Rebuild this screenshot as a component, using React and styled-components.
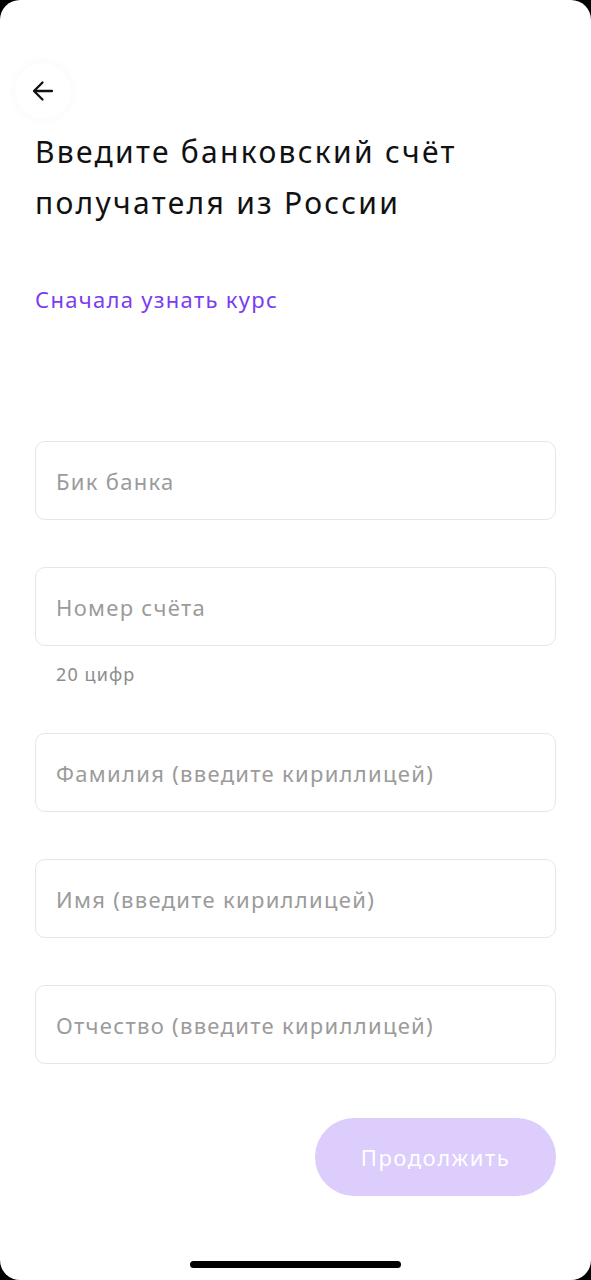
import React from 'react';
import styled, { createGlobalStyle } from 'styled-components';

const GlobalStyle = createGlobalStyle`
  html, body {
    margin: 0;
    padding: 0;
    background: #000;
  }
  * { box-sizing: border-box; }
`;

const Screen = styled.div`
  position: relative;
  width: 591px;
  height: 1280px;
  background: #fff;
  border-radius: 20px;
  padding: 63px 35px 0;
  font-family: "Noto Sans", "Open Sans", sans-serif;
  display: flex;
  flex-direction: column;
`;

const BackButton = styled.button`
  width: 56px;
  height: 56px;
  margin-left: -20px;
  border: none;
  border-radius: 50%;
  background: #fff;
  box-shadow: 0 0 12px rgba(0, 0, 0, 0.035);
  display: flex;
  align-items: center;
  justify-content: center;
  padding: 0;
  cursor: pointer;
`;

const Title = styled.h1`
  margin: 7px 0 0;
  font-size: 30px;
  font-weight: 400;
  line-height: 51px;
  color: #111;
  letter-spacing: 2.3px;
`;

const RateLink = styled.a`
  margin-top: 56px;
  font-size: 22px;
  line-height: 30px;
  color: #7a3df0;
  letter-spacing: 1.3px;
  text-decoration: none;
`;

const Form = styled.div`
  margin-top: 127px;
  display: flex;
  flex-direction: column;
`;

const Field = styled.div`
  display: flex;
  flex-direction: column;
  margin-bottom: ${({ $hint }) => ($hint ? '0' : '47px')};
`;

const Input = styled.input`
  width: 100%;
  height: 79px;
  border: 1.5px solid #e6e6e6;
  border-radius: 10px;
  padding: 0 20px;
  font-family: inherit;
  font-size: 22px;
  letter-spacing: 1.3px;
  color: #111;
  outline: none;
  &::placeholder {
    color: #9b9b9b;
  }
`;

const Hint = styled.div`
  margin: 17px 0 48px 21px;
  line-height: 22px;
  font-size: 18px;
  letter-spacing: 1.1px;
  color: #8c8c8c;
`;

const Footer = styled.div`
  margin-top: 7px;
  display: flex;
  justify-content: flex-end;
`;

const ContinueButton = styled.button`
  width: 241px;
  height: 78px;
  border: none;
  border-radius: 39px;
  background: #dccdfc;
  color: #fff;
  font-family: inherit;
  font-size: 22px;
  letter-spacing: 1.5px;
  cursor: default;
`;

const HomeIndicator = styled.div`
  position: absolute;
  left: 190px;
  bottom: 12px;
  width: 211px;
  height: 7px;
  border-radius: 4px;
  background: #000;
`;

const fields = [
  { placeholder: 'Бик банка' },
  { placeholder: 'Номер счёта', hint: '20 цифр' },
  { placeholder: 'Фамилия (введите кириллицей)' },
  { placeholder: 'Имя (введите кириллицей)' },
  { placeholder: 'Отчество (введите кириллицей)' },
];

export default function App() {
  return (
    <>
      <GlobalStyle />
      <Screen>
        <BackButton aria-label="Назад">
          <svg width="24" height="24" viewBox="0 0 24 24" fill="none" stroke="#111" strokeWidth="2.3" strokeLinecap="round" strokeLinejoin="round">
            <path d="M21 12H3.5" />
            <path d="M11.5 3.5L3 12l8.5 8.5" />
          </svg>
        </BackButton>
        <Title>
          Введите банковский счёт
          <br />
          получателя из России
        </Title>
        <RateLink href="#">Сначала узнать курс</RateLink>
        <Form>
          {fields.map((f) => (
            <Field key={f.placeholder} $hint={!!f.hint}>
              <Input placeholder={f.placeholder} />
              {f.hint && <Hint>{f.hint}</Hint>}
            </Field>
          ))}
        </Form>
        <Footer>
          <ContinueButton disabled>Продолжить</ContinueButton>
        </Footer>
        <HomeIndicator />
      </Screen>
    </>
  );
}
